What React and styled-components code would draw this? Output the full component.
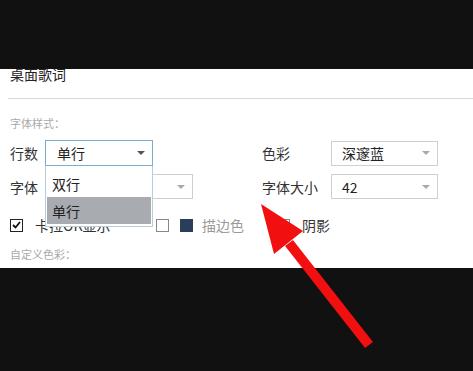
import React from 'react';
import styled, { createGlobalStyle } from 'styled-components';

const Global = createGlobalStyle`
	html, body {
		margin: 0;
		padding: 0;
		background-color: #111111;
	}
	body {
		font-family: 'Noto Sans CJK SC', 'Noto Sans', sans-serif;
	}
`;

const Page = styled.div`
	position: relative;
	width: 473px;
	height: 371px;
	overflow: hidden;
	background-color: #111111;
	padding-top: 69px;
	box-sizing: border-box;
`;

const Panel = styled.section`
	background-color: #fff;
	height: 199px;
	overflow: hidden;
	padding-left: 10px;
	box-sizing: border-box;
`;

const Title = styled.h1`
	margin: -5px 0 0 0;
	font-size: 14px;
	line-height: 20px;
	font-weight: 400;
	color: #222;
`;

const Divider = styled.hr`
	border: 0;
	border-top: 1px solid #d9d9d9;
	margin: 14px 0 0 -2px;
`;

const Hint = styled.div`
	font-size: 11px;
	line-height: 14px;
	color: #aaaaaa;
	margin-top: ${(p) => p.top}px;
`;

const Row = styled.div`
	display: flex;
	align-items: center;
	height: ${(p) => p.h}px;
	margin-top: ${(p) => p.top}px;
`;

const Group = styled.div`
	position: relative;
	display: flex;
	align-items: center;
	width: ${(p) => p.w}px;
	flex-shrink: 0;
`;

const Label = styled.span`
	width: ${(p) => p.w}px;
	font-size: 14px;
	color: #333;
	flex-shrink: 0;
`;

const Select = styled.div`
	position: relative;
	display: flex;
	align-items: center;
	width: ${(p) => p.w}px;
	height: ${(p) => p.h}px;
	box-sizing: border-box;
	border: 1px solid ${(p) => (p.active ? '#7badd0' : '#cfcfcf')};
	padding-left: ${(p) => p.pad}px;
	font-size: 14px;
	color: #222;
	background-color: #fff;

	&::after {
		content: '';
		position: absolute;
		right: 7px;
		top: 50%;
		margin-top: -2px;
		border-left: 4px solid transparent;
		border-right: 4px solid transparent;
		border-top: 4px solid ${(p) => (p.active ? '#555' : '#aaa')};
	}
`;

const Menu = styled.ul`
	position: absolute;
	left: 35px;
	top: 26px;
	z-index: 5;
	width: 108px;
	margin: 0;
	padding: 4px 1px 2px;
	list-style: none;
	box-sizing: border-box;
	border: 1px solid #b9ccd9;
	border-top: 0;
	background-color: #fff;
`;

const MenuItem = styled.li`
	height: 27px;
	line-height: 28px;
	padding-left: 5px;
	font-size: 14px;
	color: #222;
	background-color: ${(p) => (p.selected ? '#a8acb0' : '#fff')};
`;

const Check = styled.span`
	width: 13px;
	height: 13px;
	box-sizing: border-box;
	border: 1px solid ${(p) => (p.checked ? '#222' : '#888')};
	display: inline-flex;
	align-items: center;
	justify-content: center;
	background-color: #fff;
	flex-shrink: 0;
`;

const Swatch = styled.span`
	width: 13px;
	height: 13px;
	background-color: #2a3d5a;
	margin-left: 11px;
	flex-shrink: 0;
`;

const CheckText = styled.span`
	font-size: 14px;
	color: ${(p) => (p.muted ? '#9a9a9a' : '#333')};
	margin-left: ${(p) => p.gap}px;
	white-space: nowrap;
`;

const Tick = () => (
	<svg width="9" height="8" viewBox="0 0 9 8">
		<path d="M1 4 L3.5 6.5 L8 1" fill="none" stroke="#111" strokeWidth="1.8" />
	</svg>
);

const Arrow = styled.svg`
	position: absolute;
	left: 0;
	top: 0;
	z-index: 10;
	pointer-events: none;
`;

const App = () => {
	return (
		<Page>
			<Global />
			<Panel>
				<Title>桌面歌词</Title>
				<Divider />
				<Hint top={17}>字体样式：</Hint>
				<Row h={26} top={10}>
					<Group w={252}>
						<Label w={35}>行数</Label>
						<Select w={108} h={26} pad={11} active>
							单行
						</Select>
						<Menu>
							<MenuItem>双行</MenuItem>
							<MenuItem selected>单行</MenuItem>
						</Menu>
					</Group>
					<Label w={69}>色彩</Label>
					<Select w={107} h={25} pad={10}>
						深邃蓝
					</Select>
				</Row>
				<Row h={25} top={8}>
					<Group w={252}>
						<Label w={35}>字体</Label>
						<Select w={148} h={25} pad={10} />
					</Group>
					<Label w={69}>字体大小</Label>
					<Select w={107} h={25} pad={10}>
						42
					</Select>
				</Row>
				<Row h={20} top={16}>
					<Group w={146}>
						<Check checked>
							<Tick />
						</Check>
						<CheckText gap={12}>卡拉OK显示</CheckText>
					</Group>
					<Group w={121}>
						<Check />
						<Swatch />
						<CheckText gap={9} muted>
							描边色
						</CheckText>
					</Group>
					<Group w={100}>
						<Check />
						<CheckText gap={12}>阴影</CheckText>
					</Group>
				</Row>
				<Hint top={12}>自定义色彩：</Hint>
			</Panel>
			<Arrow width="473" height="371" viewBox="0 0 473 371">
				<line x1="289" y1="243" x2="369" y2="345" stroke="#f20f0f" strokeWidth="10" />
				<polygon points="261,204 274,254 303,231" fill="#f20f0f" />
			</Arrow>
		</Page>
	);
};

export default App;
